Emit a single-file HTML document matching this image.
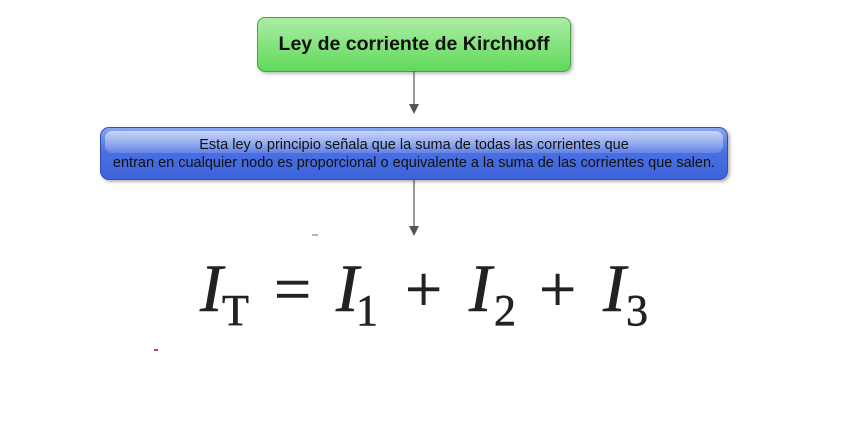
<!DOCTYPE html>
<html><head><meta charset="utf-8"><style>
html,body{margin:0;padding:0;background:#fff;width:856px;height:442px;overflow:hidden;position:relative;font-family:"Liberation Sans",sans-serif}
.g{position:absolute;left:257px;top:17px;width:312px;height:53px;border:1px solid #4a9e45;border-radius:8px;background:linear-gradient(#acedA6,#86e37f 50%,#5fd95b);box-shadow:2px 2px 3px rgba(0,0,0,.25);text-align:center;line-height:53px;font-weight:bold;font-size:19.5px;color:#111}
.b{position:absolute;left:100px;top:127px;width:626px;height:51px;border:1px solid #2f4fb8;border-radius:9px;background:linear-gradient(#8aa6f0,#4a70e2 45%,#3d63dc);box-shadow:2px 2px 3px rgba(0,0,0,.3);overflow:hidden}
.b .hl{position:absolute;left:4px;right:4px;top:3px;height:22px;border-radius:7px;background:linear-gradient(rgba(255,255,255,.55),rgba(255,255,255,.15))}
.b .t{position:absolute;left:0;right:0;top:8px;text-align:center;font-size:14.5px;line-height:18px;color:#111}
</style></head><body>
<div class="g">Ley de corriente de Kirchhoff</div>
<svg width="856" height="442" style="position:absolute;left:0;top:0">
<line x1="414" y1="71" x2="414" y2="104" stroke="#555" stroke-width="1.2"/>
<polygon points="409,104 419,104 414,114" fill="#555"/>
<line x1="414" y1="179" x2="414" y2="226" stroke="#555" stroke-width="1.2"/>
<polygon points="409,226 419,226 414,236" fill="#555"/>
<line x1="312" y1="235" x2="318" y2="235" stroke="#666" stroke-width="1"/>
<rect x="154" y="349" width="4" height="2" fill="#c44"/>
<g font-family="Liberation Serif, serif" fill="#222" stroke="#222" stroke-width="0.6">
<text x="200" y="311" font-size="68" font-style="italic">I</text>
<text x="222" y="325" font-size="44">T</text>
<text x="274" y="311" font-size="66">=</text>
<text x="336" y="311" font-size="68" font-style="italic">I</text>
<text x="356" y="325" font-size="44">1</text>
<text x="405" y="311" font-size="66">+</text>
<text x="469" y="311" font-size="68" font-style="italic">I</text>
<text x="494" y="325" font-size="44">2</text>
<text x="539" y="311" font-size="66">+</text>
<text x="603" y="311" font-size="68" font-style="italic">I</text>
<text x="626" y="325" font-size="44">3</text>
</g>
</svg>
<div class="b"><div class="hl"></div><div class="t">Esta ley o principio señala que la suma de todas las corrientes que<br>entran en cualquier nodo es proporcional o equivalente a la suma de las corrientes que salen.</div></div>
</body></html>
